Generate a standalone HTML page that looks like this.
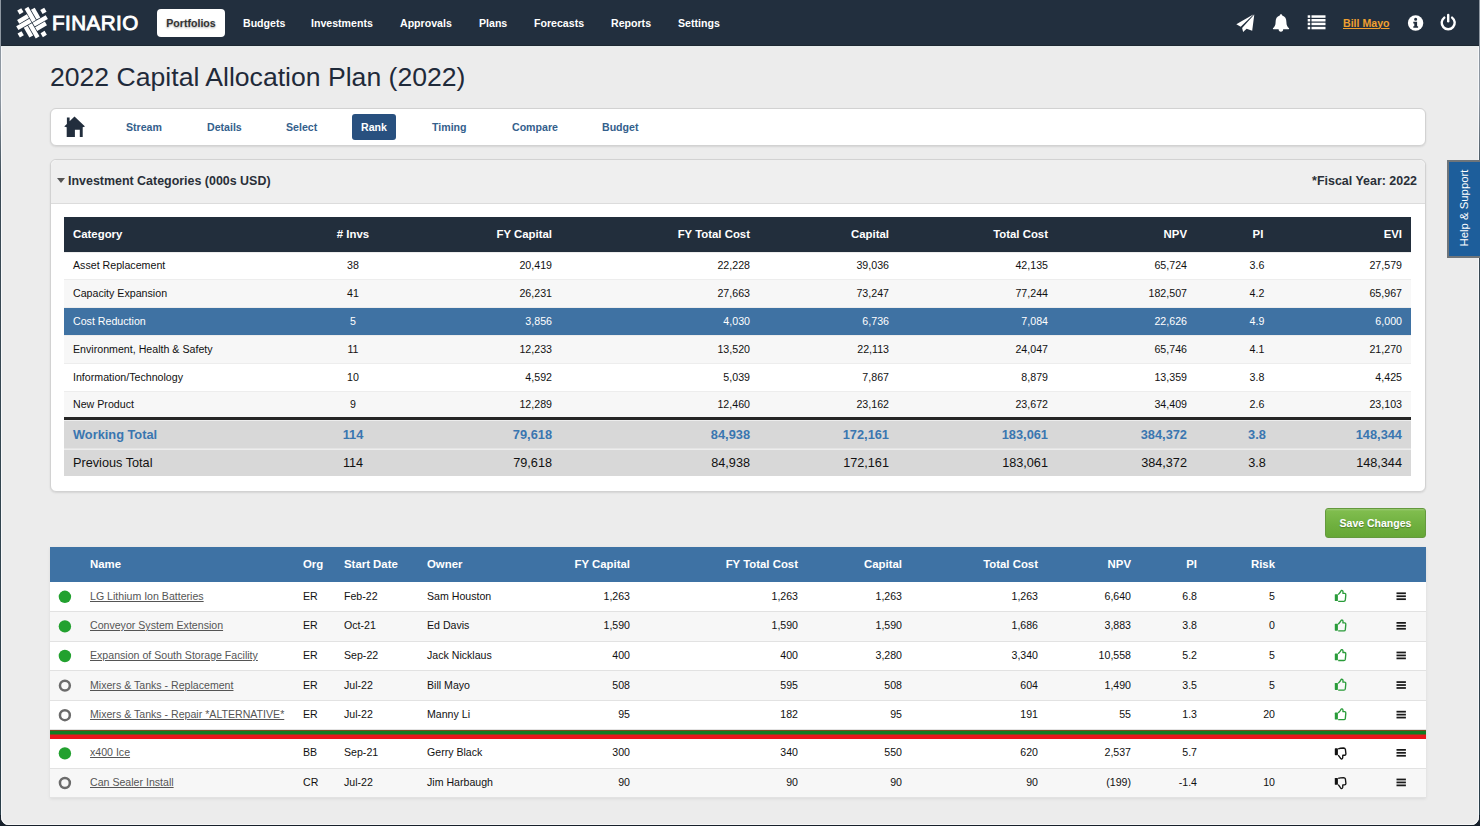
<!DOCTYPE html>
<html><head><meta charset="utf-8">
<style>
*{box-sizing:border-box;margin:0;padding:0}
html,body{width:1480px;height:826px;overflow:hidden;background:#17202b}
body{font-family:"Liberation Sans",sans-serif;position:relative}
#edge{position:absolute;left:0;top:0;width:1480px;height:815px;background:linear-gradient(#8e97a1 0,#8e97a1 100px,#3a4a55 180px,#2b3f4a 100%)}
#win{position:absolute;left:1px;top:0;width:1478px;height:825px;background:#ececec;border-radius:0 0 8px 8px;box-shadow:inset 1px 0 #f7f8fa,inset -1px 0 #f7f8fa,inset 0 -1px #f7f7f7}
#hdr{position:absolute;left:1px;top:0;width:1478px;height:46px;background:#222f3e;box-shadow:inset 0 -1px #1d2731,0 1px #e8eeee}
.nav{position:absolute;top:0;height:45px;line-height:45px;color:#fff;font-weight:bold;font-size:10.6px;white-space:nowrap}
.abs{position:absolute;white-space:nowrap}
#title{left:50px;top:62px;font-size:26.6px;color:#1f2a3a}
.panel{position:absolute;left:50px;width:1376px;background:#fff;border:1px solid #d2d2d2;border-radius:6px;box-shadow:0 1px 2px rgba(0,0,0,.10)}
.tab{position:absolute;top:0;height:36px;line-height:36px;font-weight:bold;font-size:10.6px;color:#34608c}
table{border-collapse:collapse;table-layout:fixed}
#t1{position:absolute;left:64px;top:217px;width:1347px;font-size:10.65px;color:#111}
#t1 th{background:#222e3c;color:#fff;font-weight:bold;height:34.6px;font-size:11.4px}
#t1 td{height:27.8px;box-shadow:inset 0 1px #ededed}
#t1 tr.alt td{background:#f7f7f7}
#t1 tr.hl td{background:#3f72a3;color:#fff}
#t1 th, #t1 td{padding:0 9px 0 9px;white-space:nowrap}
.r{text-align:right}.c{text-align:center}.l{text-align:left}
#t1 tr.wt td{background:#d8d8d8;color:#3a76b0;font-weight:bold;font-size:12.8px;height:30px;border-top:3px solid #262626;padding-top:2px}
#t1 tr.pt td{background:#d8d8d8;color:#111;font-size:12.7px;height:27.6px;border-top:1px solid #e4e4e4;padding-top:2px}
#t2{position:absolute;left:50px;top:547px;width:1376px;font-size:10.6px;color:#111;box-shadow:0 1px 3px rgba(0,0,0,.08)}
#t2 th{background:#3e72a4;color:#fff;font-weight:bold;height:35px;font-size:11.4px;white-space:nowrap;padding:0 8px 2px}
#t2 td{height:29.6px;border-bottom:1px solid #e2e2e2;white-space:nowrap;background:#fff;padding:0 8px 2px}
#t2 tr.alt td{background:#f7f7f7}
#t2 tr.bar td{height:8.7px;padding:0;border:0;background:linear-gradient(#117c22 0,#117c22 50%,#ea161b 50%,#ea161b 100%)}
#t2 a{color:#555;text-decoration:underline}
#ov{position:absolute;left:0;top:0}
</style></head>
<body>
<div id="edge"></div><div id="win"></div>
<div id="hdr"></div>
<div class="abs" style="left:52px;top:9.6px;font-size:20.6px;line-height:26px;letter-spacing:0.45px;color:#fff;-webkit-text-stroke:0.9px #fff">FINARIO</div>
<div class="nav" style="left:157px;top:9px;height:28px;line-height:28px;width:68px;background:#fff;border-radius:4px;color:#333;text-align:center;text-shadow:0 1px 2px rgba(0,0,0,.35)">Portfolios</div>
<div class="nav" style="left:243px;top:1px">Budgets</div>
<div class="nav" style="left:311px;top:1px">Investments</div>
<div class="nav" style="left:400px;top:1px">Approvals</div>
<div class="nav" style="left:479px;top:1px">Plans</div>
<div class="nav" style="left:534px;top:1px">Forecasts</div>
<div class="nav" style="left:611px;top:1px">Reports</div>
<div class="nav" style="left:678px;top:1px">Settings</div>
<div class="nav" style="left:1343px;top:0.5px;color:#f0a030;text-decoration:underline">Bill Mayo</div>
<div id="title" class="abs">2022 Capital Allocation Plan (2022)</div>

<div class="panel" style="top:108px;height:38px">
  <div class="tab" style="left:75px">Stream</div>
  <div class="tab" style="left:156px">Details</div>
  <div class="tab" style="left:235px">Select</div>
  <div class="tab" style="left:301px;top:5px;height:26px;line-height:26px;width:44px;background:#28507f;color:#fff;border-radius:3px;text-align:center">Rank</div>
  <div class="tab" style="left:381px">Timing</div>
  <div class="tab" style="left:461px">Compare</div>
  <div class="tab" style="left:551px">Budget</div>
</div>

<div class="panel" style="top:159px;height:333px">
  <div style="position:absolute;left:0;top:0;width:100%;height:44px;background:#efefef;border-bottom:1px solid #dcdcdc;border-radius:6px 6px 0 0"></div>
  <div class="abs" style="left:6px;top:18px;width:0;height:0;border-left:4.2px solid transparent;border-right:4.2px solid transparent;border-top:5px solid #555"></div>
  <div class="abs" style="left:17px;top:14px;font-size:12.45px;font-weight:bold;color:#2a2f38">Investment Categories (000s USD)</div>
  <div class="abs" style="right:8px;top:14px;font-size:12.45px;font-weight:bold;color:#2a2f38">*Fiscal Year: 2022</div>
</div>
<table id="t1">
  <colgroup><col style="width:239px"><col style="width:100px"><col style="width:158px"><col style="width:198px"><col style="width:139px"><col style="width:159px"><col style="width:139px"><col style="width:122px"><col style="width:93px"></colgroup>
  <tr><th class="l">Category</th><th class="c"># Invs</th><th class="r">FY Capital</th><th class="r">FY Total Cost</th><th class="r">Capital</th><th class="r">Total Cost</th><th class="r">NPV</th><th class="c" style="padding-left:11px">PI</th><th class="r">EVI</th></tr>
  <tr class=""><td>Asset Replacement</td><td class="c">38</td><td class="r">20,419</td><td class="r">22,228</td><td class="r">39,036</td><td class="r">42,135</td><td class="r">65,724</td><td class="c">3.6</td><td class="r">27,579</td></tr>
  <tr class="alt"><td>Capacity Expansion</td><td class="c">41</td><td class="r">26,231</td><td class="r">27,663</td><td class="r">73,247</td><td class="r">77,244</td><td class="r">182,507</td><td class="c">4.2</td><td class="r">65,967</td></tr>
  <tr class="hl"><td>Cost Reduction</td><td class="c">5</td><td class="r">3,856</td><td class="r">4,030</td><td class="r">6,736</td><td class="r">7,084</td><td class="r">22,626</td><td class="c">4.9</td><td class="r">6,000</td></tr>
  <tr class="alt"><td>Environment, Health &amp; Safety</td><td class="c">11</td><td class="r">12,233</td><td class="r">13,520</td><td class="r">22,113</td><td class="r">24,047</td><td class="r">65,746</td><td class="c">4.1</td><td class="r">21,270</td></tr>
  <tr class=""><td>Information/Technology</td><td class="c">10</td><td class="r">4,592</td><td class="r">5,039</td><td class="r">7,867</td><td class="r">8,879</td><td class="r">13,359</td><td class="c">3.8</td><td class="r">4,425</td></tr>
  <tr class="alt"><td>New Product</td><td class="c">9</td><td class="r">12,289</td><td class="r">12,460</td><td class="r">23,162</td><td class="r">23,672</td><td class="r">34,409</td><td class="c">2.6</td><td class="r">23,103</td></tr>
  <tr class="wt"><td>Working Total</td><td class="c">114</td><td class="r">79,618</td><td class="r">84,938</td><td class="r">172,161</td><td class="r">183,061</td><td class="r">384,372</td><td class="c">3.8</td><td class="r">148,344</td></tr>
  <tr class="pt"><td>Previous Total</td><td class="c">114</td><td class="r">79,618</td><td class="r">84,938</td><td class="r">172,161</td><td class="r">183,061</td><td class="r">384,372</td><td class="c">3.8</td><td class="r">148,344</td></tr>
</table>

<div class="abs" style="left:1325px;top:508px;width:101px;height:30px;border-radius:3px;background:linear-gradient(#9ccb76 0,#80bd4e 2px,#6fb03f 16px,#66a736 100%);border:1px solid #64993e;color:#fff;font-weight:bold;font-size:10.5px;line-height:28px;text-align:center;text-shadow:0 1px 1px rgba(0,0,0,.3)">Save Changes</div>

<table id="t2">
  <colgroup><col style="width:32px"><col style="width:213px"><col style="width:41px"><col style="width:83px"><col style="width:101px"><col style="width:118px"><col style="width:168px"><col style="width:104px"><col style="width:136px"><col style="width:93px"><col style="width:66px"><col style="width:78px"><col style="width:97px"><col style="width:46px"></colgroup>
  <tr><th></th><th class="l">Name</th><th class="l">Org</th><th class="l">Start Date</th><th class="l">Owner</th><th class="r">FY Capital</th><th class="r">FY Total Cost</th><th class="r">Capital</th><th class="r">Total Cost</th><th class="r">NPV</th><th class="r">PI</th><th class="r">Risk</th><th></th><th></th></tr>
  <tr class=""><td></td><td><a>LG Lithium Ion Batteries</a></td><td>ER</td><td>Feb-22</td><td>Sam Houston</td><td class="r">1,263</td><td class="r">1,263</td><td class="r">1,263</td><td class="r">1,263</td><td class="r">6,640</td><td class="r">6.8</td><td class="r">5</td><td></td><td></td></tr>
  <tr class="alt"><td></td><td><a>Conveyor System Extension</a></td><td>ER</td><td>Oct-21</td><td>Ed Davis</td><td class="r">1,590</td><td class="r">1,590</td><td class="r">1,590</td><td class="r">1,686</td><td class="r">3,883</td><td class="r">3.8</td><td class="r">0</td><td></td><td></td></tr>
  <tr class=""><td></td><td><a>Expansion of South Storage Facility</a></td><td>ER</td><td>Sep-22</td><td>Jack Nicklaus</td><td class="r">400</td><td class="r">400</td><td class="r">3,280</td><td class="r">3,340</td><td class="r">10,558</td><td class="r">5.2</td><td class="r">5</td><td></td><td></td></tr>
  <tr class="alt"><td></td><td><a>Mixers &amp; Tanks - Replacement</a></td><td>ER</td><td>Jul-22</td><td>Bill Mayo</td><td class="r">508</td><td class="r">595</td><td class="r">508</td><td class="r">604</td><td class="r">1,490</td><td class="r">3.5</td><td class="r">5</td><td></td><td></td></tr>
  <tr class=""><td></td><td><a>Mixers &amp; Tanks - Repair *ALTERNATIVE*</a></td><td>ER</td><td>Jul-22</td><td>Manny Li</td><td class="r">95</td><td class="r">182</td><td class="r">95</td><td class="r">191</td><td class="r">55</td><td class="r">1.3</td><td class="r">20</td><td></td><td></td></tr>
  <tr class="bar"><td colspan="14"></td></tr>
  <tr class=""><td></td><td><a>x400 Ice</a></td><td>BB</td><td>Sep-21</td><td>Gerry Black</td><td class="r">300</td><td class="r">340</td><td class="r">550</td><td class="r">620</td><td class="r">2,537</td><td class="r">5.7</td><td class="r"></td><td></td><td></td></tr>
  <tr class="alt"><td></td><td><a>Can Sealer Install</a></td><td>CR</td><td>Jul-22</td><td>Jim Harbaugh</td><td class="r">90</td><td class="r">90</td><td class="r">90</td><td class="r">90</td><td class="r">(199)</td><td class="r">-1.4</td><td class="r">10</td><td></td><td></td></tr>
</table>

<div class="abs" style="left:1447px;top:160px;width:33px;height:98px;background:#1d5e9b;border:2.5px solid #6f757a;border-right:0"></div>
<div class="abs" style="left:1464px;top:208px;transform:translate(-50%,-50%) rotate(-90deg);font-size:11.35px;color:#fff">Help &amp; Support</div>

<svg id="ov" width="1480" height="826" viewBox="0 0 1480 826">
  <g transform="translate(32.05 22.63) rotate(-30) scale(0.04608)" fill="#fff"><rect x="8" y="-338" width="94" height="330"/><rect x="118" y="-252" width="94" height="244"/><rect x="-146" y="-390" width="100" height="100"/><rect x="8" y="8" width="330" height="94"/><rect x="8" y="118" width="244" height="94"/><rect x="290" y="-146" width="100" height="100"/><rect x="-102" y="8" width="94" height="330"/><rect x="-212" y="8" width="94" height="244"/><rect x="46" y="290" width="100" height="100"/><rect x="-338" y="-102" width="330" height="94"/><rect x="-252" y="-212" width="244" height="94"/><rect x="-390" y="46" width="100" height="100"/></g>
  <path d="M1236.3 24.3 L1253.7 14.2 L1240.7 26.7 Z" fill="#fff"/>
  <path d="M1254.3 14.5 L1252.2 30.8 L1246.6 28.8 L1243.1 31.9 L1242.1 28.1 Z" fill="#fff"/>
  <path d="M1281 14.2 C1281.9 14.2 1282.2 14.8 1282.2 15.5 C1285.2 16.3 1286.4 18.8 1286.4 22 C1286.4 25.3 1287.4 26.9 1289.1 28.3 Q1289.3 29.2 1288.4 29.2 H1273.6 Q1272.7 29.2 1272.9 28.3 C1274.6 26.9 1275.6 25.3 1275.6 22 C1275.6 18.8 1276.8 16.3 1279.8 15.5 C1279.8 14.8 1280.1 14.2 1281 14.2Z" fill="#fff"/>
  <path d="M1278.6 29 A2.3 2.7 0 0 0 1283.2 29 Z" fill="#fff"/>
  <g fill="#fff">
    <rect x="1307.7" y="15.3" width="2.5" height="2.5"/><rect x="1311.5" y="15.3" width="14" height="2.5"/>
    <rect x="1307.7" y="19.0" width="2.5" height="2.5"/><rect x="1311.5" y="19.0" width="14" height="2.5"/>
    <rect x="1307.7" y="22.7" width="2.5" height="2.5"/><rect x="1311.5" y="22.7" width="14" height="2.5"/>
    <rect x="1307.7" y="26.8" width="2.5" height="2.5"/><rect x="1311.5" y="26.8" width="14" height="2.5"/>
  </g>
  <circle cx="1415.6" cy="23" r="7.7" fill="#fff"/>
  <path d="M1414.1 19.2 a1.55 1.55 0 1 0 3.1 0 a1.55 1.55 0 1 0 -3.1 0Z M1413.3 21.8 H1417.1 V26.2 H1418.1 V27.8 H1413.3 V26.2 H1414.3 V23.4 H1413.3Z" fill="#222e3d"/>
  <path d="M1444.3 17.6 A6.5 6.5 0 1 0 1452.1 17.6" fill="none" stroke="#fff" stroke-width="2.4" stroke-linecap="round"/>
  <path d="M1448.2 14.9 V21.3" stroke="#fff" stroke-width="2.4" stroke-linecap="round"/>
  <path d="M64.2 126.5 L66.9 123.9 V117.4 H69.6 V121.2 L74.5 116.4 L85 126.5 L82.7 127.2 V137 H79.8 V129.8 H74.9 V137 H66.7 V127.2 Z" fill="#222e3d"/>
  <circle cx="64.9" cy="596.80" r="6.2" fill="#22a12f"/><g transform="translate(0.00 0.00)"><rect x="1334.8" y="594.2" width="3.1" height="6.9" rx="0.6" fill="#2a9c3a"/><path d="M1338.2 594.6 L1340.3 592.2 L1340.9 591.1 Q1341.6 590.0 1342.6 590.7 Q1343.3 591.5 1342.9 593.3 H1344.8 Q1346 593.6 1345.8 595 L1345.3 600.2 Q1345.1 601.3 1343.9 601.3 H1338.2" fill="none" stroke="#2a9c3a" stroke-width="1.35" stroke-linejoin="round"/></g><rect x="1396.5" y="592.40" width="9.4" height="1.75" fill="#1a1a1a"/><rect x="1396.5" y="595.35" width="9.4" height="1.75" fill="#1a1a1a"/><rect x="1396.5" y="598.30" width="9.4" height="1.75" fill="#1a1a1a"/><circle cx="64.9" cy="626.40" r="6.2" fill="#22a12f"/><g transform="translate(0.00 29.60)"><rect x="1334.8" y="594.2" width="3.1" height="6.9" rx="0.6" fill="#2a9c3a"/><path d="M1338.2 594.6 L1340.3 592.2 L1340.9 591.1 Q1341.6 590.0 1342.6 590.7 Q1343.3 591.5 1342.9 593.3 H1344.8 Q1346 593.6 1345.8 595 L1345.3 600.2 Q1345.1 601.3 1343.9 601.3 H1338.2" fill="none" stroke="#2a9c3a" stroke-width="1.35" stroke-linejoin="round"/></g><rect x="1396.5" y="622.00" width="9.4" height="1.75" fill="#1a1a1a"/><rect x="1396.5" y="624.95" width="9.4" height="1.75" fill="#1a1a1a"/><rect x="1396.5" y="627.90" width="9.4" height="1.75" fill="#1a1a1a"/><circle cx="64.9" cy="656.00" r="6.2" fill="#22a12f"/><g transform="translate(0.00 59.20)"><rect x="1334.8" y="594.2" width="3.1" height="6.9" rx="0.6" fill="#2a9c3a"/><path d="M1338.2 594.6 L1340.3 592.2 L1340.9 591.1 Q1341.6 590.0 1342.6 590.7 Q1343.3 591.5 1342.9 593.3 H1344.8 Q1346 593.6 1345.8 595 L1345.3 600.2 Q1345.1 601.3 1343.9 601.3 H1338.2" fill="none" stroke="#2a9c3a" stroke-width="1.35" stroke-linejoin="round"/></g><rect x="1396.5" y="651.60" width="9.4" height="1.75" fill="#1a1a1a"/><rect x="1396.5" y="654.55" width="9.4" height="1.75" fill="#1a1a1a"/><rect x="1396.5" y="657.50" width="9.4" height="1.75" fill="#1a1a1a"/><circle cx="64.9" cy="685.60" r="4.95" fill="none" stroke="#6b6b6b" stroke-width="2.5"/><g transform="translate(0.00 88.80)"><rect x="1334.8" y="594.2" width="3.1" height="6.9" rx="0.6" fill="#2a9c3a"/><path d="M1338.2 594.6 L1340.3 592.2 L1340.9 591.1 Q1341.6 590.0 1342.6 590.7 Q1343.3 591.5 1342.9 593.3 H1344.8 Q1346 593.6 1345.8 595 L1345.3 600.2 Q1345.1 601.3 1343.9 601.3 H1338.2" fill="none" stroke="#2a9c3a" stroke-width="1.35" stroke-linejoin="round"/></g><rect x="1396.5" y="681.20" width="9.4" height="1.75" fill="#1a1a1a"/><rect x="1396.5" y="684.15" width="9.4" height="1.75" fill="#1a1a1a"/><rect x="1396.5" y="687.10" width="9.4" height="1.75" fill="#1a1a1a"/><circle cx="64.9" cy="715.20" r="4.95" fill="none" stroke="#6b6b6b" stroke-width="2.5"/><g transform="translate(0.00 118.40)"><rect x="1334.8" y="594.2" width="3.1" height="6.9" rx="0.6" fill="#2a9c3a"/><path d="M1338.2 594.6 L1340.3 592.2 L1340.9 591.1 Q1341.6 590.0 1342.6 590.7 Q1343.3 591.5 1342.9 593.3 H1344.8 Q1346 593.6 1345.8 595 L1345.3 600.2 Q1345.1 601.3 1343.9 601.3 H1338.2" fill="none" stroke="#2a9c3a" stroke-width="1.35" stroke-linejoin="round"/></g><rect x="1396.5" y="710.80" width="9.4" height="1.75" fill="#1a1a1a"/><rect x="1396.5" y="713.75" width="9.4" height="1.75" fill="#1a1a1a"/><rect x="1396.5" y="716.70" width="9.4" height="1.75" fill="#1a1a1a"/><circle cx="64.9" cy="753.40" r="6.2" fill="#22a12f"/><g transform="translate(0.00 0.70)"><rect x="1334.8" y="747.6" width="3.1" height="6.9" rx="0.6" fill="#111"/><path d="M1338.2 748.1 Q1340.2 747.4 1343.5 747.3 Q1345 747.3 1345.4 748.7 L1345.9 753.2 Q1345.9 754.5 1344.5 754.5 H1342.8 L1342.7 757.1 Q1342.4 758.4 1341.3 758.3 Q1340.6 758 1340.1 756.9 L1338.2 754.4" fill="none" stroke="#111" stroke-width="1.35" stroke-linejoin="round"/></g><rect x="1396.5" y="749.00" width="9.4" height="1.75" fill="#1a1a1a"/><rect x="1396.5" y="751.95" width="9.4" height="1.75" fill="#1a1a1a"/><rect x="1396.5" y="754.90" width="9.4" height="1.75" fill="#1a1a1a"/><circle cx="64.9" cy="783.00" r="4.95" fill="none" stroke="#6b6b6b" stroke-width="2.5"/><g transform="translate(0.00 30.30)"><rect x="1334.8" y="747.6" width="3.1" height="6.9" rx="0.6" fill="#111"/><path d="M1338.2 748.1 Q1340.2 747.4 1343.5 747.3 Q1345 747.3 1345.4 748.7 L1345.9 753.2 Q1345.9 754.5 1344.5 754.5 H1342.8 L1342.7 757.1 Q1342.4 758.4 1341.3 758.3 Q1340.6 758 1340.1 756.9 L1338.2 754.4" fill="none" stroke="#111" stroke-width="1.35" stroke-linejoin="round"/></g><rect x="1396.5" y="778.60" width="9.4" height="1.75" fill="#1a1a1a"/><rect x="1396.5" y="781.55" width="9.4" height="1.75" fill="#1a1a1a"/><rect x="1396.5" y="784.50" width="9.4" height="1.75" fill="#1a1a1a"/>
</svg>
</body></html>
